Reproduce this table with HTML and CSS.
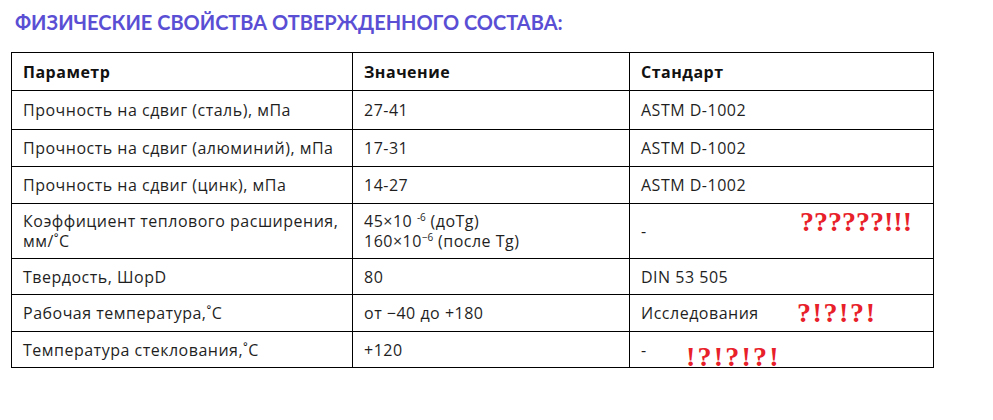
FILE: index.html
```html
<!DOCTYPE html>
<html lang="ru">
<head>
<meta charset="utf-8">
<link rel="stylesheet" href="styles.css">
</head>
<body>
<div class="page">
  <h2 class="title">ФИЗИЧЕСКИЕ СВОЙСТВА ОТВЕРЖДЕННОГО СОСТАВА:</h2>
  <table class="props">
    <colgroup>
      <col class="c1"><col class="c2"><col class="c3">
    </colgroup>
    <thead>
      <tr class="r-head"><th>Параметр</th><th>Значение</th><th>Стандарт</th></tr>
    </thead>
    <tbody>
      <tr class="r-a"><td>Прочность на сдвиг (сталь), мПа</td><td>27-41</td><td>ASTM D-1002</td></tr>
      <tr class="r-b"><td>Прочность на сдвиг (алюминий), мПа</td><td>17-31</td><td>ASTM D-1002</td></tr>
      <tr class="r-b"><td>Прочность на сдвиг (цинк), мПа</td><td>14-27</td><td>ASTM D-1002</td></tr>
      <tr class="r-tall"><td>Коэффициент теплового расширения, мм/˚С</td><td>45×10 <sup>-6</sup> (доTg)<br>160×10<sup>−6</sup> (после Tg)</td><td>-</td></tr>
      <tr class="r-c"><td>Твердость, ШорD</td><td>80</td><td>DIN 53 505</td></tr>
      <tr class="r-b"><td>Рабочая температура,˚С</td><td>от −40 до +180</td><td>Исследования</td></tr>
      <tr class="r-c"><td>Температура стеклования,˚С</td><td>+120</td><td>-</td></tr>
    </tbody>
  </table>
  <span class="mark mark-1">??????!!!</span>
  <span class="mark mark-2">?!?!?!</span>
  <span class="mark mark-3">!?!?!?!</span>
</div>
</body>
</html>
```

FILE: styles.css
```css
html, body {
  margin: 0;
  padding: 0;
  background: #ffffff;
}

.page {
  position: relative;
  padding: 9px 0 0 11px;
  font-family: "Open Sans", Lato, "Liberation Sans", sans-serif;
  color: #1f1f1f;
}

.title {
  margin: 0 0 16px 4px;
  font-family: Lato, "Open Sans", sans-serif;
  font-size: 20px;
  line-height: 27px;
  font-weight: 700;
  color: #5a4fd4;
  letter-spacing: 0;
}

.props {
  border-collapse: collapse;
  table-layout: fixed;
  width: 922px;
  font-size: 16px;
  letter-spacing: 0.5px;
}

.c1 { width: 341px; }
.c2 { width: 277px; }
.c3 { width: 304px; }

.props th,
.props td {
  border: 1px solid #000;
  padding: 0 8px 0 11px;
  text-align: left;
  vertical-align: middle;
  line-height: 20px;
  font-weight: 400;
}

.props th {
  font-weight: 700;
  color: #111;
  letter-spacing: 0.5px;
}

.r-head { height: 38px; }
.r-a { height: 39px; }
.r-b { height: 37px; }
.r-c { height: 36px; }
.r-tall { height: 55px; }

.props sup {
  font-size: 10px;
  line-height: 0;
  vertical-align: 6px;
  letter-spacing: 0;
}

.mark {
  position: absolute;
  font-family: "Liberation Serif", "Times New Roman", serif;
  font-weight: 700;
  font-size: 28px;
  line-height: 28px;
  color: #e8202a;
  white-space: nowrap;
}

.mark-1 { left: 800px; top: 208px; }
.mark-2 { left: 797px; top: 299px; letter-spacing: 1.6px; }
.mark-3 { left: 686px; top: 343px; letter-spacing: 2.2px; }
```
